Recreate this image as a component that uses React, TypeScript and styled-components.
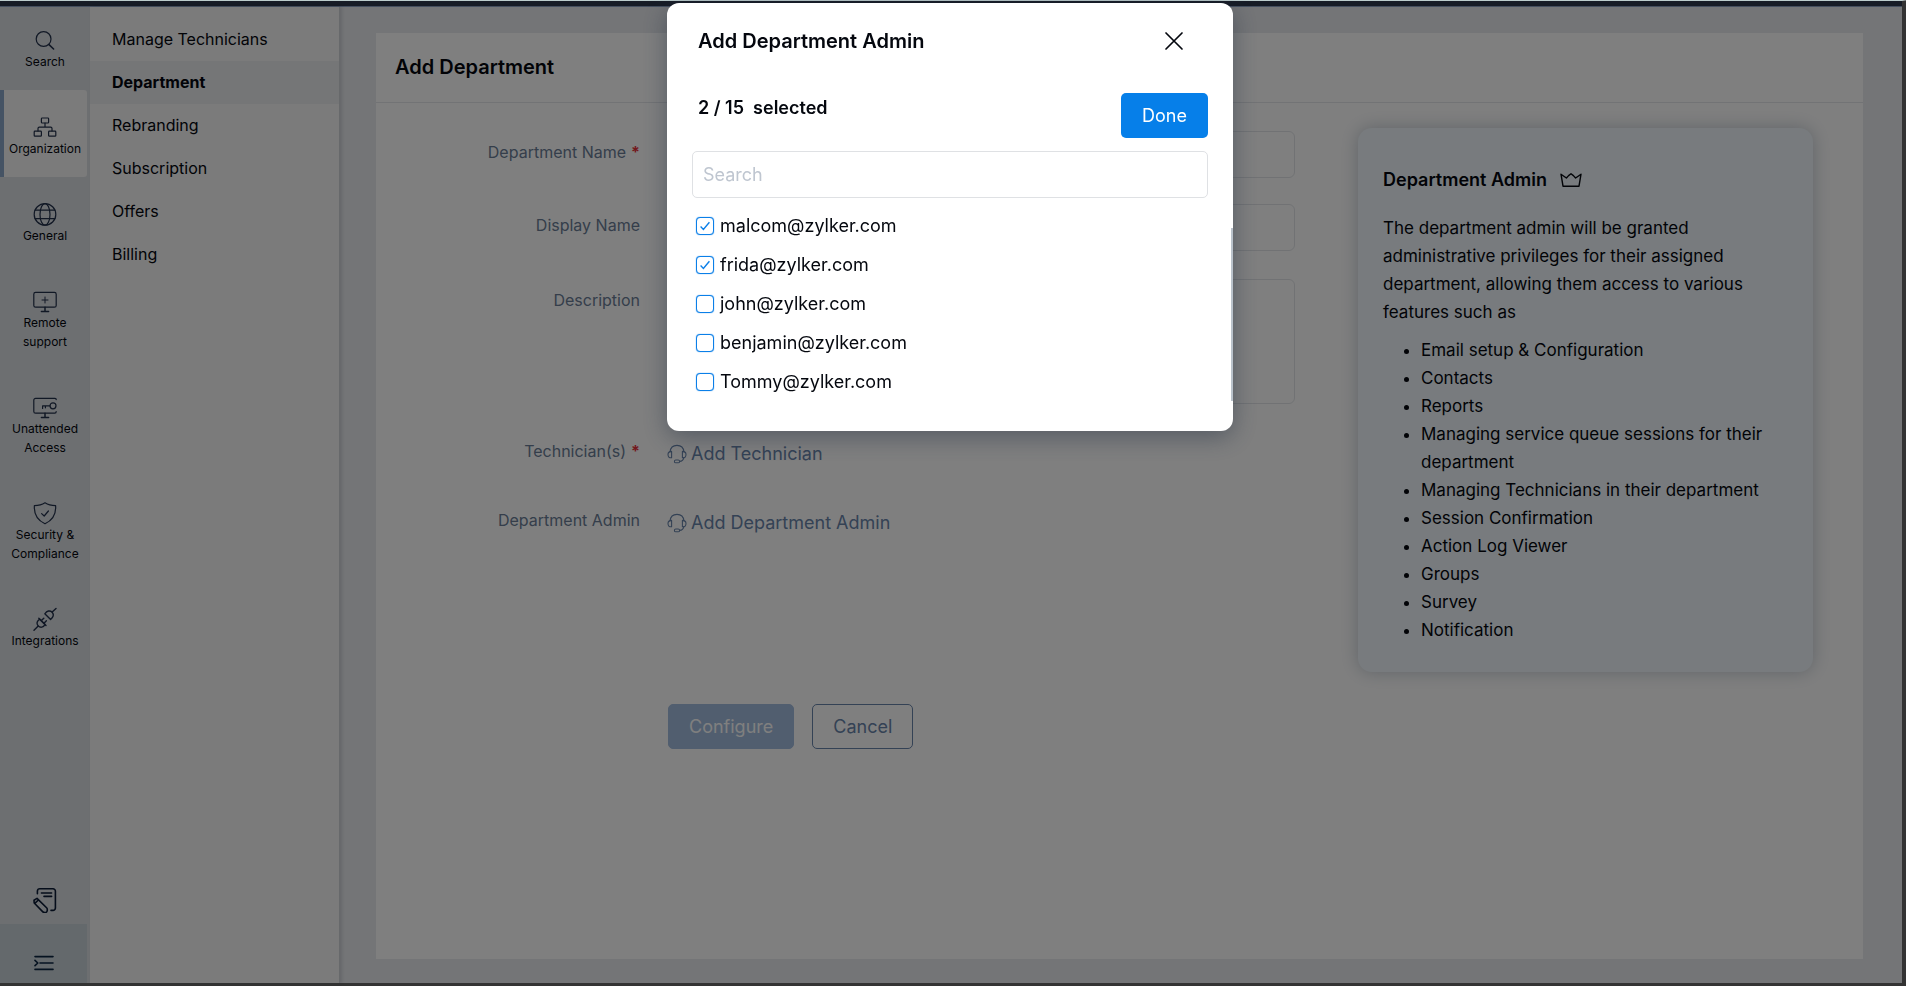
import React, { useState } from "react";
import styled, { createGlobalStyle, css } from "styled-components";

const GlobalStyle = createGlobalStyle`
  *, *::before, *::after { box-sizing: border-box; }
  body {
    margin: 0;
    font-family: Inter, "Liberation Sans", sans-serif;
    font-size: 16px;
    color: #04070e;
    background: #e8eaee;
  }
  button, input, textarea { font: inherit; color: inherit; }
  h1, h2, h3, p, ul { margin: 0; padding: 0; }
`;

const Frame = styled.div`
  display: flex;
  flex-direction: column;
  min-height: 100vh;
  border-top: 1px solid #bccccc;
  border-right: 4px solid #666666;
  border-bottom: 3px solid #666666;
`;

const TopStrip = styled.header`
  height: 6px;
  background: #2e384c;
  border-bottom: 1px solid #8a9fbe;
`;

const Workspace = styled.div`
  display: flex;
  flex: 1;
`;

const Rail = styled.nav`
  display: flex;
  flex-direction: column;
  width: 90px;
  flex-shrink: 0;
  background: #dadee3;
`;

const RailItem = styled.a<{ $active?: boolean; $first?: boolean }>`
  display: flex;
  flex-direction: column;
  align-items: center;
  width: 87px;
  padding: ${(p) => (p.$first ? 21 : 25)}px 0 19px 3px;
  font-size: 12px;
  line-height: 19px;
  text-align: center;
  white-space: pre;
  text-decoration: none;
  color: #04070e;
  svg { color: #22304a; }
  ${(p) =>
    p.$active &&
    css`
      background: #f6f6f6;
      border-radius: 0 3px 3px 0;
      box-shadow: inset 4px 0 0 #8aa6c8;
    `}
`;

const RailNote = styled.button`
  display: flex;
  justify-content: center;
  width: 90px;
  margin-top: auto;
  padding: 0 0 11px;
  border: 0;
  background: none;
  color: #0a1a34;
`;

const RailToggle = styled.button`
  display: flex;
  justify-content: center;
  align-items: center;
  width: 87px;
  height: 59px;
  padding: 18px 0 0;
  border: 0;
  background: #c8d2d8;
  color: #0a2440;
`;

const SubNav = styled.nav`
  display: flex;
  flex-direction: column;
  width: 250px;
  flex-shrink: 0;
  padding-top: 11px;
  background: #f6f6f6;
  border-right: 1px solid #cfd2d6;
  box-shadow: 2px 0 3px rgba(60, 70, 90, 0.16);
  z-index: 1;
`;

const SubNavLink = styled.a<{ $active?: boolean }>`
  padding: 0 22px;
  font-size: 16px;
  line-height: 43px;
  text-decoration: none;
  color: #04070e;
  font-weight: ${(p) => (p.$active ? 700 : 400)};
  background: ${(p) => (p.$active ? "#eaecef" : "transparent")};
`;

const Main = styled.main`
  display: flex;
  flex: 1;
  min-width: 0;
  padding: 26px 39px 24px 36px;
`;

const Card = styled.section`
  flex: 1;
  min-width: 0;
  background: #ffffff;
`;

const CardTitle = styled.h1`
  height: 70px;
  padding-left: 19px;
  border-bottom: 1px solid #e4e6ea;
  font-size: 20px;
  line-height: 68px;
  font-weight: 600;
`;

const CardBody = styled.div`
  display: flex;
  align-items: flex-start;
  gap: 63px;
  padding: 25px 50px 25px 0;
`;

const Form = styled.form`
  display: flex;
  flex-direction: column;
  flex: 1;
  min-width: 0;
  gap: 26px;
  padding-top: 3px;
`;

const Row = styled.div<{ $tall?: boolean }>`
  display: grid;
  grid-template-columns: 264px minmax(0, 1fr);
  column-gap: 27px;
  align-items: start;
  padding-top: ${(p) => (p.$tall ? 2 : 0)}px;
`;

const Label = styled.label`
  font-size: 16px;
  line-height: 43px;
  text-align: right;
  color: #6a7c96;
`;

const Required = styled.span`
  margin-left: 5px;
  font-weight: 700;
  color: #e8313b;
`;

const fieldStyle = css`
  width: 100%;
  border: 1px solid #e2e5e9;
  border-radius: 6px;
  background: transparent;
  outline: none;
`;

const TextField = styled.input`
  ${fieldStyle}
  height: 47px;
  padding: 0 12px;
`;

const TextArea = styled.textarea`
  ${fieldStyle}
  display: block;
  height: 125px;
  padding: 12px;
  resize: none;
`;

const AddLink = styled.button`
  display: flex;
  align-items: center;
  gap: 4px;
  height: 43px;
  padding: 4px 0 0;
  border: 0;
  background: none;
  font-size: 18px;
  color: #6884aa;
`;

const Actions = styled.div`
  display: flex;
  gap: 18px;
  margin: 136px 0 0 292px;
`;

const Action = styled.button<{ $filled?: boolean }>`
  height: 45px;
  padding: 0 20px;
  border-radius: 5px;
  border: 1px solid ${(p) => (p.$filled ? "#a2bcde" : "#6884aa")};
  background: ${(p) => (p.$filled ? "#a2bcde" : "transparent")};
  color: ${(p) => (p.$filled ? "#ffffff" : "#6884aa")};
  font-size: 18px;
`;

const Help = styled.aside`
  width: 455px;
  flex-shrink: 0;
  padding: 38px 25px 28px;
  border-radius: 14px;
  background: #f0f7fc;
  box-shadow: 0 0 18px rgba(60, 80, 110, 0.32);
  font-size: 17px;
  line-height: 28px;
`;

const HelpTitle = styled.h2`
  display: flex;
  align-items: center;
  gap: 13px;
  margin-bottom: 20px;
  font-size: 18px;
  font-weight: 600;
`;

const HelpList = styled.ul`
  margin-top: 10px;
  padding-left: 38px;
`;

const Overlay = styled.div`
  position: fixed;
  inset: 1px 0 0;
  display: flex;
  justify-content: center;
  align-items: flex-start;
  padding: 2px 6px 0 0;
  background: rgba(0, 0, 0, 0.5);
  z-index: 10;
`;

const Dialog = styled.div`
  width: 566px;
  max-width: 100%;
  padding: 24px 0 30px;
  border-radius: 12px;
  background: #ffffff;
  box-shadow: 0 6px 24px rgba(30, 45, 65, 0.45);
`;

const DialogHead = styled.div`
  display: flex;
  justify-content: space-between;
  align-items: center;
  height: 28px;
  padding: 0 48px 0 31px;
`;

const DialogTitle = styled.h2`
  font-size: 20px;
  font-weight: 600;
`;

const CloseButton = styled.button`
  display: flex;
  padding: 0;
  border: 0;
  background: none;
`;

const DialogBar = styled.div`
  display: flex;
  justify-content: space-between;
  align-items: flex-start;
  margin-top: 38px;
  padding: 0 25px 0 31px;
`;

const Count = styled.p`
  font-size: 18px;
  line-height: 29px;
  font-weight: 600;
  white-space: pre;
`;

const DoneButton = styled.button`
  width: 87px;
  height: 45px;
  padding: 0;
  border: 0;
  border-radius: 5px;
  background: #067fe9;
  color: #ffffff;
  font-size: 18px;
`;

const DialogSearch = styled.div`
  padding: 13px 25px 0;
  input {
    width: 100%;
    height: 47px;
    padding: 0 10px;
    border: 1px solid #dfe1e4;
    border-radius: 5px;
    outline: none;
    font-size: 18px;
  }
  input::placeholder { color: #bfc6d0; opacity: 1; }
`;

const Options = styled.div`
  display: flex;
  flex-direction: column;
  position: relative;
  margin-top: 8px;
  padding: 0 29px;
  &::after {
    content: "";
    position: absolute;
    top: 22px;
    right: 0;
    bottom: 0;
    width: 2px;
    background: #bac2cb;
  }
`;

const Option = styled.label`
  display: flex;
  align-items: center;
  gap: 6px;
  height: 39px;
  font-size: 18px;
`;

const CheckSlot = styled.span`
  display: grid;
  width: 18px;
  height: 18px;
  input, svg { grid-area: 1 / 1; }
  svg { pointer-events: none; }
`;

const Checkbox = styled.input`
  appearance: none;
  width: 18px;
  height: 18px;
  margin: 0;
  border: 1px solid #0b7fe8;
  border-radius: 4px;
  background: #ffffff;
  box-shadow: 0 0 1px #0b7fe8;
`;

const Icon = ({ w, h = w, sw = 1.2, children }: { w: number; h?: number; sw?: number; children: React.ReactNode }) => (
  <svg width={w} height={h} viewBox={`0 0 ${w} ${h}`} fill="none" stroke="currentColor" strokeWidth={sw} strokeLinecap="round" strokeLinejoin="round" aria-hidden="true">
    {children}
  </svg>
);

const railItems = [
  {
    label: "Search",
    icon: (
      <>
        <circle cx="10.6" cy="11" r="7.4" />
        <path d="M16 16.6 20.6 21" strokeWidth="1.6" />
      </>
    ),
  },
  {
    label: "Organization",
    icon: (
      <>
        <rect x="8.4" y="3" width="7.2" height="5" rx="0.8" />
        <path d="M12 8v4.2M5 16v-2.4a1.4 1.4 0 0 1 1.4-1.4h11.2a1.4 1.4 0 0 1 1.4 1.4V16" />
        <rect x="1.2" y="16.2" width="7.2" height="5" rx="0.8" />
        <rect x="15.6" y="16.2" width="7.2" height="5" rx="0.8" />
      </>
    ),
  },
  {
    label: "General",
    icon: (
      <>
        <circle cx="12" cy="12.4" r="10.8" />
        <ellipse cx="12" cy="12.4" rx="5" ry="10.8" />
        <path d="M2 8.2h20M2 16.6h20" />
      </>
    ),
  },
  {
    label: "Remote\nsupport",
    icon: (
      <>
        <rect x="0.8" y="3.4" width="22.4" height="14.8" rx="1.8" />
        <path d="M12 18.2v4M8.4 22.4h7.2" strokeWidth="1.5" />
        <path d="M12 8v6M9 11h6" strokeWidth="1" />
      </>
    ),
  },
  {
    label: "Unattended\nAccess",
    icon: (
      <>
        <path d="M23.2 4.6c0-.8-.5-1.2-1.2-1.2H2.6A1.8 1.8 0 0 0 .8 5.2v11.2a1.8 1.8 0 0 0 1.8 1.8h19.2c.8 0 1.4-.6 1.4-1.6" />
        <path d="M12 18.2v4M8.4 22.4h7.2" strokeWidth="1.5" />
        <circle cx="20" cy="10.8" r="3" />
        <path d="M17 10.8H9.6v2.6M12.4 10.8v2" />
      </>
    ),
  },
  {
    label: "Security &\nCompliance",
    icon: (
      <>
        <path d="M12 1.8c3 2 6.6 2.8 10.6 2.8.6 8-3 14.6-10.6 18.2C4.400 19.200.8 12.600 1.400 4.600 5.400 4.600 9 3.800 12 1.800Z" />
        <path d="m8.600 12.600 2.600 2.400 4.200-5" />
      </>
    ),
  },
  {
    label: "Integrations",
    icon: (
      <g strokeWidth="1.4">
        <path d="M1 23.200 5.200 19M19.200 5 23 1.400" />
        <path d="M5.200 19C3 16.400 4 14 6.800 12.200L12 17.600C10.200 20.400 7.600 21.200 5.200 19Z" />
        <path d="M5.800 11.200 13 18.600" />
        <path d="M19.200 5.200C21.200 7.600 20.400 10.200 17.600 12.400L11.800 6.800C14 3.800 16.800 3 19.200 5.200Z" />
        <path d="M8.400 13.600 10.800 11.200M11 16.200 13.400 13.800" />
      </g>
    ),
  },
];

const subNavItems = ["Manage Technicians", "Department", "Rebranding", "Subscription", "Offers", "Billing"];

const features = [
  "Email setup & Configuration",
  "Contacts",
  "Reports",
  "Managing service queue sessions for their department",
  "Managing Technicians in their department",
  "Session Confirmation",
  "Action Log Viewer",
  "Groups",
  "Survey",
  "Notification",
];

const people = ["malcom@zylker.com", "frida@zylker.com", "john@zylker.com", "benjamin@zylker.com", "Tommy@zylker.com"];

const Headset = () => (
  <Icon w={20} sw={1.1}>
    <path d="M3 8C3.400 4 6 1.400 10 1.400S16.600 4 17 8" />
    <path d="M4.600 7.400v6.400C2 14 1 12.600 1 10.600S2.200 7.400 4.600 7.400ZM15.400 7.400v6.400c2.600.2 3.600-1.200 3.600-3.200s-1.200-3.200-3.600-3.200Z" />
    <path d="M16.800 13.600c-.4 2.400-1.600 3.600-4.200 3.800" />
    <rect x="7.400" y="16" width="5.200" height="2.800" rx="1.400" />
  </Icon>
);

export default function App() {
  const [selected, setSelected] = useState<string[]>(people.slice(0, 2));
  const toggle = (name: string) =>
    setSelected((now) => (now.includes(name) ? now.filter((n) => n !== name) : [...now, name]));

  return (
    <>
      <GlobalStyle />
      <Frame>
        <TopStrip />
        <Workspace>
          <Rail aria-label="Sections">
            {railItems.map((item, i) => (
              <RailItem key={item.label} href="#" $first={i === 0} $active={item.label === "Organization"}>
                <Icon w={24}>{item.icon}</Icon>
                {item.label}
              </RailItem>
            ))}
            <RailNote type="button" aria-label="Notes">
              <Icon w={26} sw={1.6}>
                <path d="M5.400 6.800V4A2.400 2.400 0 0 1 7.800 1.800H21A2.400 2.400 0 0 1 23.400 4.200V21a2.400 2.400 0 0 1-2.400 2.400h-2" />
                <path d="M9.400 6h10.200M12 9.400h7.600" />
                <path d="M2 13.200 5 11.400l9.600 9.400c1.200 1.200.8 4.200-.6 4.600-1.400.6-2.600 0-3.400-.8L2.200 16Zm1 3 3.400-3.200" />
              </Icon>
            </RailNote>
            <RailToggle type="button" aria-label="Expand menu">
              <Icon w={20} h={16} sw={1.6}>
                <path d="M1 1.600h18M6 8h13M1 14.400h18M1 5.400 3.800 8 1 10.600" />
              </Icon>
            </RailToggle>
          </Rail>

          <SubNav aria-label="Organization">
            {subNavItems.map((name) => (
              <SubNavLink key={name} href="#" $active={name === "Department"}>
                {name}
              </SubNavLink>
            ))}
          </SubNav>

          <Main>
            <Card>
              <CardTitle>Add Department</CardTitle>
              <CardBody>
                <Form onSubmit={(e) => e.preventDefault()}>
                  <Row>
                    <Label htmlFor="dept-name">
                      Department Name<Required>*</Required>
                    </Label>
                    <TextField id="dept-name" type="text" />
                  </Row>
                  <Row>
                    <Label htmlFor="display-name">Display Name</Label>
                    <TextField id="display-name" type="text" />
                  </Row>
                  <Row $tall>
                    <Label htmlFor="description">Description</Label>
                    <TextArea id="description" />
                  </Row>
                  <Row>
                    <Label htmlFor="technicians">
                      Technician(s)<Required>*</Required>
                    </Label>
                    <AddLink id="technicians" type="button">
                      <Headset />
                      Add Technician
                    </AddLink>
                  </Row>
                  <Row>
                    <Label htmlFor="admins">Department Admin</Label>
                    <AddLink id="admins" type="button">
                      <Headset />
                      Add Department Admin
                    </AddLink>
                  </Row>
                  <Actions>
                    <Action type="submit" $filled>
                      Configure
                    </Action>
                    <Action type="button">Cancel</Action>
                  </Actions>
                </Form>

                <Help>
                  <HelpTitle>
                    Department Admin
                    <Icon w={22} h={16} sw={1.4}>
                      <path d="M1 2.200 3 14.200h16L21 2.200 15.600 6 13.400 3.600 11 1.800 8.600 3.600 6.400 6Z" />
                    </Icon>
                  </HelpTitle>
                  <p>
                    The department admin will be granted administrative privileges for their assigned department,
                    allowing them access to various features such as
                  </p>
                  <HelpList>
                    {features.map((f) => (
                      <li key={f}>{f}</li>
                    ))}
                  </HelpList>
                </Help>
              </CardBody>
            </Card>
          </Main>
        </Workspace>
      </Frame>

      <Overlay>
        <Dialog role="dialog" aria-modal="true" aria-labelledby="dialog-title">
          <DialogHead>
            <DialogTitle id="dialog-title">Add Department Admin</DialogTitle>
            <CloseButton type="button" aria-label="Close">
              <Icon w={22} sw={1.700}>
                <path d="M3 3 19 19M19 3 3 19" />
              </Icon>
            </CloseButton>
          </DialogHead>
          <DialogBar>
            <Count>{`${selected.length} / 15  selected`}</Count>
            <DoneButton type="button">Done</DoneButton>
          </DialogBar>
          <DialogSearch>
            <input type="search" placeholder="Search" aria-label="Search" />
          </DialogSearch>
          <Options>
            {people.map((name) => (
              <Option key={name}>
                <CheckSlot>
                  <Checkbox type="checkbox" checked={selected.includes(name)} onChange={() => toggle(name)} />
                  {selected.includes(name) && (
                    <svg width="18" height="18" viewBox="0 0 18 18" fill="none" stroke="#0b7fe8" strokeWidth="1.400" aria-hidden="true">
                      <path d="m4.600 9.600 2.800 2.800 6-7.200" />
                    </svg>
                  )}
                </CheckSlot>
                {name}
              </Option>
            ))}
          </Options>
        </Dialog>
      </Overlay>
    </>
  );
}
